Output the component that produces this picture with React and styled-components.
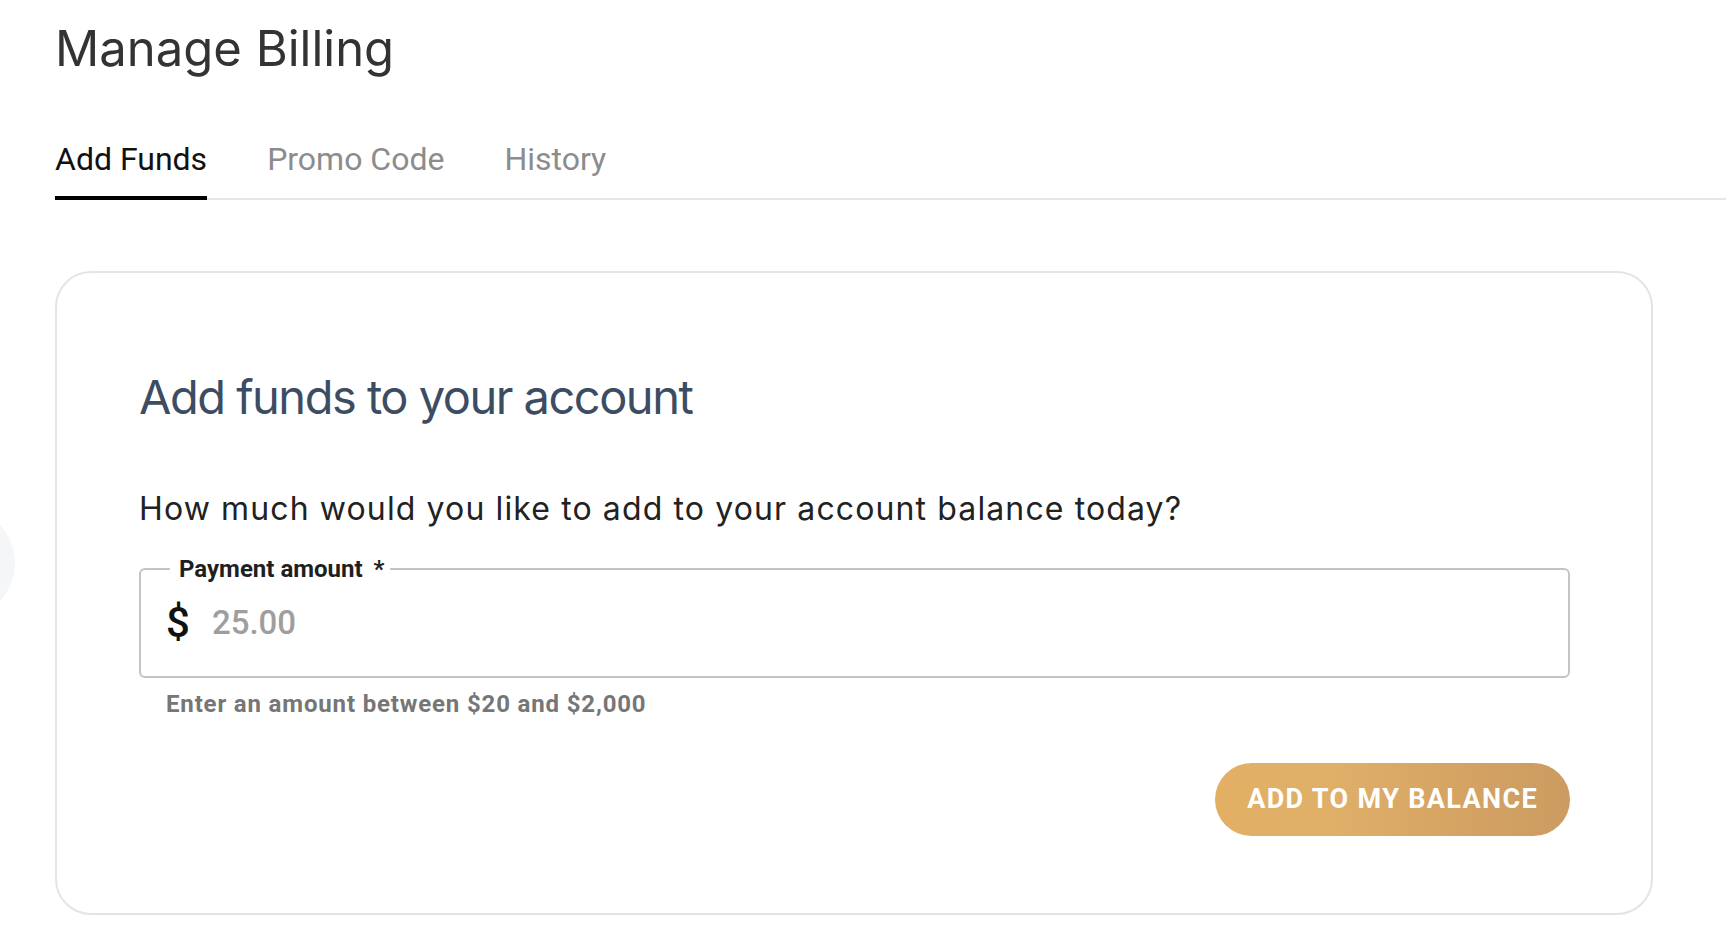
import React from "react";
import styled, { createGlobalStyle } from "styled-components";

const GlobalStyle = createGlobalStyle`
  html, body {
    margin: 0;
    padding: 0;
    background: #ffffff;
  }

  body {
    font-family: "Roboto", "Liberation Sans", sans-serif;
    overflow: hidden;
  }

  * {
    box-sizing: border-box;
  }
`;

const Page = styled.div`
  position: relative;
  min-height: 940px;
  padding-left: 55px;
`;

const Bubble = styled.div`
  position: absolute;
  left: -95px;
  top: 488px;
  width: 110px;
  height: 110px;
  border-radius: 50%;
  background: #f5f6f8;
`;

const Title = styled.h1`
  margin: 20px 0 0;
  font-family: "Inter", "Roboto", sans-serif;
  font-size: 49px;
  line-height: 1.2;
  font-weight: 400;
  color: #333333;
`;

const TabBar = styled.div`
  display: flex;
  gap: 60px;
  margin-top: 61px;
  border-bottom: 2px solid #e6e6e6;
`;

const Tab = styled.button`
  margin: 0 0 -2px;
  padding: 0 0 18px;
  border: 0;
  border-bottom: 4px solid ${(p) => (p.$active ? "#000000" : "transparent")};
  background: transparent;
  font-family: "Roboto", sans-serif;
  font-size: 32px;
  line-height: 38px;
  font-weight: 400;
  color: ${(p) => (p.$active ? "#111111" : "#8c8c8c")};
  cursor: pointer;
`;

const Card = styled.section`
  width: 1598px;
  margin-top: 71px;
  padding: 96px 81px 77px 82px;
  border: 2px solid #e4e4e4;
  border-radius: 36px;
  background: #ffffff;
`;

const Heading = styled.h2`
  margin: 0;
  font-family: "Inter", "Roboto", sans-serif;
  font-size: 47px;
  line-height: 1.2;
  font-weight: 400;
  letter-spacing: -0.032em;
  color: #3c4d63;
`;

const Question = styled.p`
  margin: 65px 0 0;
  font-family: "Inter", "Roboto", sans-serif;
  font-size: 32px;
  line-height: 1.2;
  font-weight: 400;
  letter-spacing: 0.035em;
  color: #222222;
`;

const Field = styled.div`
  position: relative;
  display: flex;
  align-items: center;
  height: 110px;
  margin-top: 39px;
  padding-left: 25px;
  border: 2px solid #c4c4c4;
  border-radius: 6px;
`;

const FieldLabel = styled.label`
  position: absolute;
  top: -15px;
  left: 29px;
  padding: 0 6px 0 9px;
  background: #ffffff;
  font-size: 24px;
  line-height: 28px;
  font-weight: 700;
  color: #1f1f1f;
`;

const Required = styled.span`
  margin-left: 11px;
`;

const Currency = styled.span`
  font-size: 42px;
  font-weight: 500;
  line-height: 1;
  color: #111111;
`;

const AmountInput = styled.input`
  flex: 1;
  margin-left: 20px;
  border: 0;
  outline: none;
  background: transparent;
  font-family: "Roboto", sans-serif;
  font-size: 33px;
  font-weight: 500;
  color: #222222;

  &::placeholder {
    color: #9e9e9e;
  }
`;

const Helper = styled.p`
  margin: 13px 0 0 27px;
  font-size: 24px;
  line-height: 27px;
  font-weight: 700;
  letter-spacing: 0.035em;
  color: #767676;
`;

const Actions = styled.div`
  display: flex;
  justify-content: flex-end;
  margin-top: 45px;
`;

const PrimaryButton = styled.button`
  height: 73px;
  padding: 0 32px;
  border: 0;
  border-radius: 37px;
  background: linear-gradient(90deg, #e3af65 0%, #dfaf69 35%, #d6a463 65%, #cb9b61 100%);
  font-family: "Roboto", sans-serif;
  font-size: 27px;
  font-weight: 700;
  letter-spacing: 0.05em;
  color: #ffffff;
  cursor: pointer;
`;

const tabs = ["Add Funds", "Promo Code", "History"];

const App = () => {
  return (
    <>
      <GlobalStyle />
      <Page>
        <Bubble />
        <Title>Manage Billing</Title>
        <TabBar>
          {tabs.map((t, i) => (
            <Tab key={t} $active={i === 0}>
              {t}
            </Tab>
          ))}
        </TabBar>
        <Card>
          <Heading>Add funds to your account</Heading>
          <Question>
            How much would you like to add to your account balance today?
          </Question>
          <Field>
            <FieldLabel htmlFor="amount">
              Payment amount<Required>*</Required>
            </FieldLabel>
            <Currency>$</Currency>
            <AmountInput id="amount" placeholder="25.00" />
          </Field>
          <Helper>Enter an amount between $20 and $2,000</Helper>
          <Actions>
            <PrimaryButton>ADD TO MY BALANCE</PrimaryButton>
          </Actions>
        </Card>
      </Page>
    </>
  );
};

export default App;
